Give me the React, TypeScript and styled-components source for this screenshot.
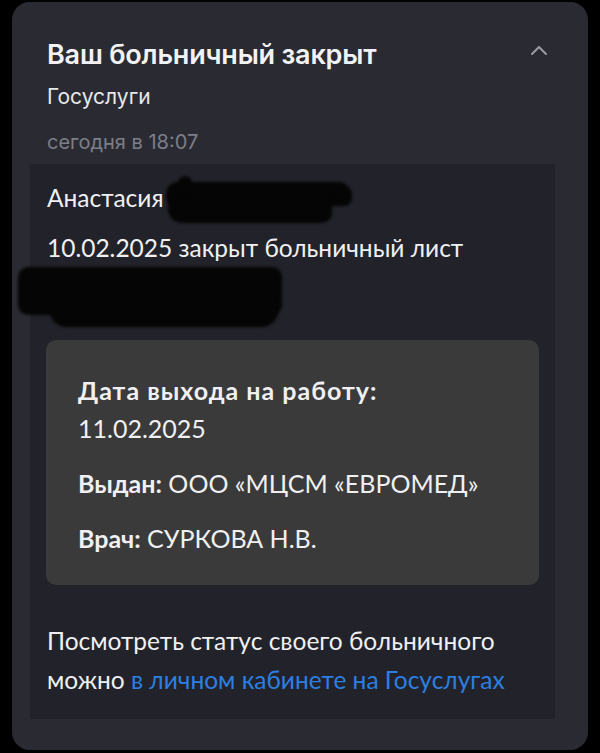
import React from "react";
import styled, { createGlobalStyle } from "styled-components";

const Global = createGlobalStyle`
  html, body { margin: 0; padding: 0; background: #000; }
  body { width: 600px; height: 753px; overflow: hidden; }
`;

const Page = styled.div`
  width: 600px;
  height: 753px;
  background: #000;
  padding: 2px 12px 3px 12px;
  box-sizing: border-box;
`;

const Card = styled.div`
  height: 100%;
  background: #2a2b32;
  border-radius: 18px;
  padding: 37px 39px 0 18px;
  box-sizing: border-box;
  display: flex;
  flex-direction: column;
`;

const Header = styled.div`
  display: flex;
  justify-content: space-between;
  align-items: flex-start;
  padding-left: 17px;
`;

const HeaderText = styled.div`
  display: flex;
  flex-direction: column;
`;

const Title = styled.div`
  font-family: Inter, "Noto Sans", sans-serif;
  font-size: 27px;
  font-weight: 600;
  color: #f2f2f4;
  line-height: 32px;
  letter-spacing: -0.2px;
`;

const Source = styled.div`
  font-family: Inter, "Noto Sans", sans-serif;
  font-size: 21px;
  color: #e8e8ea;
  line-height: 28px;
  margin-top: 12px;
`;

const Time = styled.div`
  font-family: Inter, "Noto Sans", sans-serif;
  font-size: 20px;
  color: #7c7e88;
  line-height: 26px;
  margin-top: 18px;
`;

const Chevron = styled.svg`
  margin-top: 5px;
`;

const Body = styled.div`
  position: relative;
  margin-top: 9px;
  margin-right: -6px;
  background: #22232a;
  padding: 18px 16px 20px 17px;
  font-family: Lato, "Noto Sans", sans-serif;
  color: #f0f0f2;
  font-size: 24.5px;
  line-height: 32px;
`;

const Line = styled.div<{ $gap?: number }>`
  margin-top: ${(p) => p.$gap ?? 0}px;
`;

const Spacer = styled.div<{ $h: number }>`
  height: ${(p) => p.$h}px;
`;

const Scribble = styled.div<{ $l: number; $t: number; $w: number; $h: number; $r?: string }>`
  position: absolute;
  left: ${(p) => p.$l}px;
  top: ${(p) => p.$t}px;
  width: ${(p) => p.$w}px;
  height: ${(p) => p.$h}px;
  background: #050505;
  border-radius: ${(p) => p.$r ?? "10px"};
  filter: blur(1.5px);
`;

const InfoBox = styled.div`
  background: #3a3a3b;
  border-radius: 10px;
  margin-left: -1px;
  padding: 31px 32px 28px 32px;
  display: flex;
  flex-direction: column;
  font-size: 25px;
`;

const InfoRow = styled.div<{ $gap?: number; $spread?: boolean }>`
  margin-top: ${(p) => p.$gap ?? 0}px;
  line-height: 38px;
  letter-spacing: ${(p) => (p.$spread ? "1px" : "0")};
`;

const B = styled.span`
  font-weight: 700;
`;

const Footer = styled.div`
  margin-top: 36px;
  line-height: 39px;
`;

const Link = styled.a`
  color: #2b7fe0;
  text-decoration: none;
`;

export default function App() {
  return (
    <>
      <Global />
      <Page>
        <Card>
          <Header>
            <HeaderText>
              <Title>Ваш больничный закрыт</Title>
              <Source>Госуслуги</Source>
              <Time>сегодня в 18:07</Time>
            </HeaderText>
            <Chevron width="20" height="12" viewBox="0 0 20 12">
              <path d="M3 10 L10 3 L17 10" fill="none" stroke="#9a9ca6" strokeWidth="2" strokeLinecap="round" strokeLinejoin="round" />
            </Chevron>
          </Header>
          <Body>
            <Line>Анастасия</Line>
            <Line $gap={18}>10.02.2025 закрыт больничный лист</Line>
            <Spacer $h={76} />
            <InfoBox>
              <InfoRow $spread><B>Дата выхода на работу:</B></InfoRow>
              <InfoRow>11.02.2025</InfoRow>
              <InfoRow $gap={17}><B>Выдан:</B> ООО «МЦСМ «ЕВРОМЕД»</InfoRow>
              <InfoRow $gap={17}><B>Врач:</B> СУРКОВА Н.В.</InfoRow>
            </InfoBox>
            <Footer>
              Посмотреть статус своего больничного
              <br />
              можно <Link href="#">в личном кабинете на Госуслугах</Link>
            </Footer>
            <Scribble $l={136} $t={18} $w={186} $h={24} $r="12px 14px 8px 10px" />
            <Scribble $l={138} $t={32} $w={164} $h={27} $r="6px 6px 10px 14px" />
            <Scribble $l={148} $t={12} $w={14} $h={14} $r="50% 50% 2px 2px" />
            <Scribble $l={-12} $t={103} $w={264} $h={48} $r="10px" />
            <Scribble $l={20} $t={130} $w={228} $h={33} $r="4px 4px 16px 16px" />
          </Body>
        </Card>
      </Page>
    </>
  );
}
